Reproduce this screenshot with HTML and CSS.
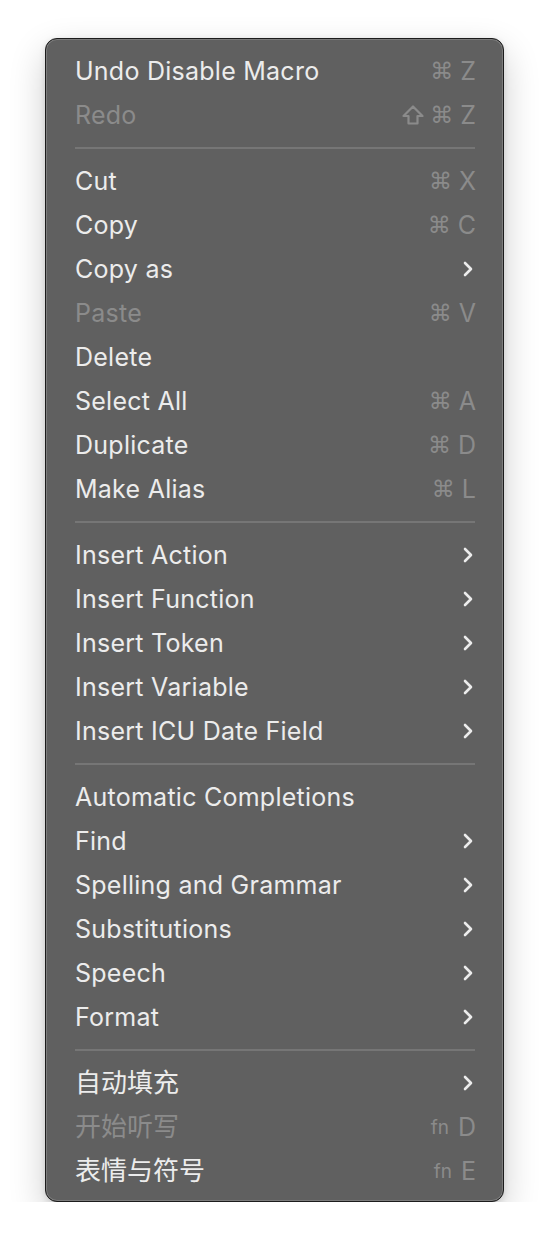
FILE: index.html
```html
<!DOCTYPE html>
<html lang="en">
<head>
<meta charset="utf-8">
<title>Context Menu</title>
<link rel="stylesheet" href="styles.css">
</head>
<body>
<div class="menu">
  <div class="item"><span class="label">Undo Disable Macro</span><span class="key"><span class="cmd">⌘</span><span class="letter">Z</span></span></div>
  <div class="item disabled"><span class="label">Redo</span><span class="key"><svg class="shift" viewBox="0 0 22 20"><path d="M11 1.5 L20.5 11 L15.5 11 L15.5 18.5 L6.5 18.5 L6.5 11 L1.5 11 Z"/></svg><span class="cmd">⌘</span><span class="letter">Z</span></span></div>
  <div class="sep"></div>
  <div class="item"><span class="label">Cut</span><span class="key"><span class="cmd">⌘</span><span class="letter">X</span></span></div>
  <div class="item"><span class="label">Copy</span><span class="key"><span class="cmd">⌘</span><span class="letter">C</span></span></div>
  <div class="item"><span class="label">Copy as</span><svg class="chev" viewBox="0 0 12 16"><path d="M3 2 L9 8 L3 14"/></svg></div>
  <div class="item disabled"><span class="label">Paste</span><span class="key"><span class="cmd">⌘</span><span class="letter">V</span></span></div>
  <div class="item"><span class="label">Delete</span></div>
  <div class="item"><span class="label">Select All</span><span class="key"><span class="cmd">⌘</span><span class="letter">A</span></span></div>
  <div class="item"><span class="label">Duplicate</span><span class="key"><span class="cmd">⌘</span><span class="letter">D</span></span></div>
  <div class="item"><span class="label">Make Alias</span><span class="key"><span class="cmd">⌘</span><span class="letter">L</span></span></div>
  <div class="sep"></div>
  <div class="item"><span class="label">Insert Action</span><svg class="chev" viewBox="0 0 12 16"><path d="M3 2 L9 8 L3 14"/></svg></div>
  <div class="item"><span class="label">Insert Function</span><svg class="chev" viewBox="0 0 12 16"><path d="M3 2 L9 8 L3 14"/></svg></div>
  <div class="item"><span class="label">Insert Token</span><svg class="chev" viewBox="0 0 12 16"><path d="M3 2 L9 8 L3 14"/></svg></div>
  <div class="item"><span class="label">Insert Variable</span><svg class="chev" viewBox="0 0 12 16"><path d="M3 2 L9 8 L3 14"/></svg></div>
  <div class="item"><span class="label">Insert ICU Date Field</span><svg class="chev" viewBox="0 0 12 16"><path d="M3 2 L9 8 L3 14"/></svg></div>
  <div class="sep"></div>
  <div class="item"><span class="label">Automatic Completions</span></div>
  <div class="item"><span class="label">Find</span><svg class="chev" viewBox="0 0 12 16"><path d="M3 2 L9 8 L3 14"/></svg></div>
  <div class="item"><span class="label">Spelling and Grammar</span><svg class="chev" viewBox="0 0 12 16"><path d="M3 2 L9 8 L3 14"/></svg></div>
  <div class="item"><span class="label">Substitutions</span><svg class="chev" viewBox="0 0 12 16"><path d="M3 2 L9 8 L3 14"/></svg></div>
  <div class="item"><span class="label">Speech</span><svg class="chev" viewBox="0 0 12 16"><path d="M3 2 L9 8 L3 14"/></svg></div>
  <div class="item"><span class="label">Format</span><svg class="chev" viewBox="0 0 12 16"><path d="M3 2 L9 8 L3 14"/></svg></div>
  <div class="sep"></div>
  <div class="item"><span class="label cjk">自动填充</span><svg class="chev" viewBox="0 0 12 16"><path d="M3 2 L9 8 L3 14"/></svg></div>
  <div class="item disabled"><span class="label cjk">开始听写</span><span class="key"><span class="fn">fn</span><span class="letter">D</span></span></div>
  <div class="item"><span class="label cjk">表情与符号</span><span class="key"><span class="fn">fn</span><span class="letter">E</span></span></div>
</div>
</body>
</html>
```

FILE: styles.css
```css
html, body {
  margin: 0;
  padding: 0;
  background: #ffffff;
}

body {
  font-family: Inter, "Noto Sans", "Noto Sans CJK SC", sans-serif;
}

.menu {
  box-sizing: border-box;
  width: 459px;
  margin: 38px 0 0 45px;
  padding: 10px 0 8px;
  background: #606060;
  border: 1px solid #1c1c1c;
  border-radius: 12px;
  box-shadow: inset 0 0 0 1px rgba(255, 255, 255, 0.18), 0 14px 36px rgba(0, 0, 0, 0.2), 0 2px 6px rgba(0, 0, 0, 0.12);
  display: flex;
  flex-direction: column;
}

.item {
  height: 44px;
  display: flex;
  align-items: center;
  justify-content: space-between;
  padding: 0 27px 0 29px;
  color: #ececec;
  font-size: 25px;
  letter-spacing: 0.25px;
}

.item.disabled {
  color: #8b8b8b;
}

.label {
  white-space: nowrap;
}

.label.cjk {
  font-family: "Noto Sans CJK SC", sans-serif;
  font-size: 26px;
  letter-spacing: 0;
  line-height: 1;
  position: relative;
  top: -2px;
}

.key {
  display: flex;
  align-items: center;
  gap: 7px;
  color: #8b8b8b;
  letter-spacing: 0;
}

.cmd {
  font-family: "DejaVu Sans", sans-serif;
  font-size: 23px;
}

.shift {
  width: 22px;
  height: 20px;
  margin-right: -1px;
}

.shift path {
  fill: none;
  stroke: #8b8b8b;
  stroke-width: 2.2;
  stroke-linejoin: round;
}

.letter {
  font-size: 25px;
}

.fn {
  font-size: 19px;
  margin-right: 2px;
}

.chev {
  width: 12px;
  height: 16px;
  margin-right: 2px;
}

.chev path {
  fill: none;
  stroke: #ececec;
  stroke-width: 2.6;
  stroke-linecap: round;
  stroke-linejoin: round;
}

.sep {
  height: 2px;
  margin: 10px 28px 10px 29px;
  background: #767676;
}
```
